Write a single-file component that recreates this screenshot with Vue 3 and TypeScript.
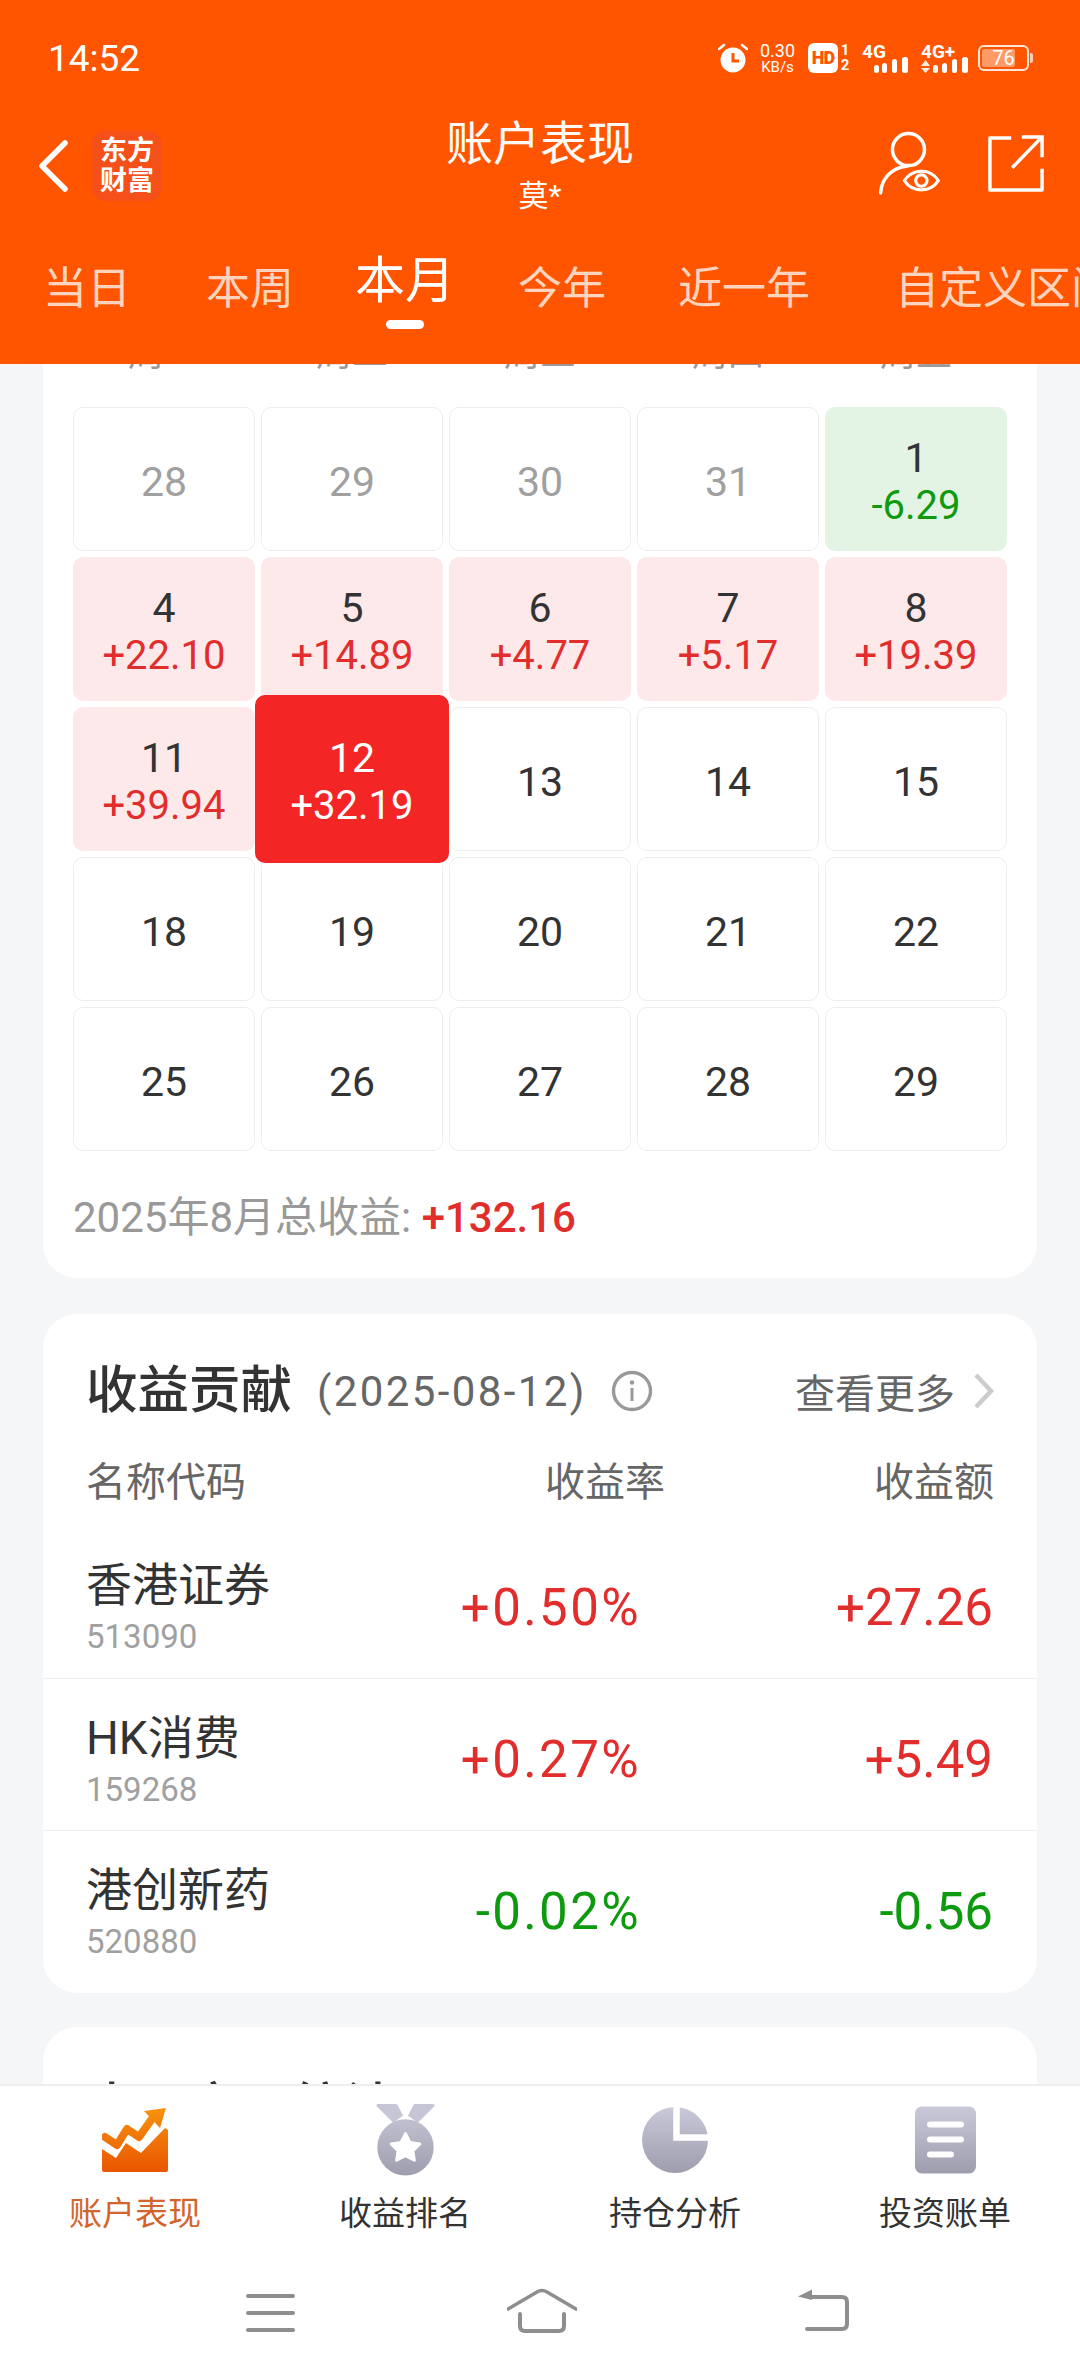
<template>
  <div class="page">
    <header class="top">
      <div class="status">
        <span class="time">14:52</span>
        <div class="status-icons">
          <svg class="alarm" viewBox="0 0 30 30" width="30" height="30">
            <circle cx="15" cy="17" r="12.5" fill="#fff" />
            <path d="M1 6 L6 2 M29 6 L24 2" stroke="#fff" stroke-width="2.4" stroke-linecap="round" />
            <path d="M15 10 V18 H21" fill="none" stroke="#ff5500" stroke-width="3" />
          </svg>
          <div class="net"><span>0.30</span><span class="net-unit">KB/s</span></div>
          <span class="hd">HD</span>
          <div class="sim"><span>1</span><span>2</span></div>
          <svg class="sig" viewBox="0 0 47 30" width="47" height="30">
            <text x="0" y="15" class="sig-text">4G</text>
            <rect x="12" y="22" width="5" height="8" rx="2.5" fill="#fff" />
            <rect x="20" y="20" width="5" height="10" rx="2.5" fill="#fff" />
            <rect x="30" y="16" width="5" height="14" rx="2.5" fill="#fff" />
            <rect x="40" y="14" width="6" height="16" rx="2.5" fill="#fff" />
          </svg>
          <svg class="sig" viewBox="0 0 47 30" width="47" height="30">
            <text x="0" y="15" class="sig-text">4G+</text>
            <path d="M0 23 L4.5 17 L9 23 Z M0 25 L9 25 L4.5 30 Z" fill="#fff" opacity=".9" />
            <rect x="12" y="22" width="5" height="8" rx="2.5" fill="#fff" />
            <rect x="21" y="20" width="5" height="10" rx="2.5" fill="#fff" />
            <rect x="31" y="16" width="5" height="14" rx="2.5" fill="#fff" />
            <rect x="41" y="14" width="6" height="16" rx="2.5" fill="#fff" />
          </svg>
          <div class="battery">
            <div class="battery-fill"></div>
            <span>76</span>
          </div>
        </div>
      </div>

      <div class="nav">
        <div class="nav-left">
          <svg viewBox="0 0 32 52" width="32" height="52">
            <path d="M27 3 L4 26 L27 49" fill="none" stroke="#fff" stroke-width="5.5" stroke-linecap="round" stroke-linejoin="round" />
          </svg>
          <div class="logo"><span>东方</span><span>财富</span></div>
        </div>
        <div class="nav-title">
          <div class="title">账户表现</div>
          <div class="sub">莫*</div>
        </div>
        <div class="nav-right">
          <svg viewBox="0 0 60 62" width="63" height="64">
            <circle cx="29" cy="18" r="15.5" fill="none" stroke="#fff" stroke-width="3.4" />
            <path d="M2 60 C3 46 12 36 28 34" fill="none" stroke="#fff" stroke-width="3.4" stroke-linecap="round" />
            <path d="M25 48 C33 36 50 36 58 48 C50 60 33 60 25 48 Z" fill="#ff5500" stroke="#fff" stroke-width="3" stroke-linejoin="round" />
            <circle cx="41.5" cy="48" r="5.5" fill="none" stroke="#fff" stroke-width="3" />
          </svg>
          <svg viewBox="0 0 58 60" width="56" height="58">
            <path d="M24 4 H2 V58 H56 V36" fill="none" stroke="#fff" stroke-width="3.6" stroke-linejoin="round" />
            <path d="M25 35 L55 4 M35 3 H56 V24" fill="none" stroke="#fff" stroke-width="3.6" />
          </svg>
        </div>
      </div>

      <div class="tabs">
        <span v-for="tab in tabs" :key="tab" class="tab" :class="{ active: tab === '本月' }">{{ tab }}</span>
      </div>
    </header>

    <main class="scroll">
      <section class="card calendar">
        <div class="weeks">
          <span v-for="w in weeks" :key="w">{{ w }}</span>
        </div>
        <div class="grid">
          <div
            v-for="cell in cells"
            :key="cell.key"
            class="cell"
            :class="[cell.kind, { today: cell.today }]"
          >
            <span class="day">{{ cell.day }}</span>
            <span v-if="cell.value" class="val">{{ cell.value }}</span>
          </div>
        </div>
        <div class="total">2025年8月总收益: <b>+132.16</b></div>
      </section>

      <section class="card contrib">
        <div class="card-head">
          <h3>收益贡献</h3>
          <span class="date">(2025-08-12)</span>
          <svg class="info" viewBox="0 0 42 42" width="42" height="42">
            <circle cx="21" cy="21" r="18.5" fill="none" stroke="#999" stroke-width="3.4" />
            <circle cx="21" cy="12.5" r="2.2" fill="#999" />
            <path d="M21 18 V31" stroke="#999" stroke-width="3" />
          </svg>
          <span class="more">查看更多</span>
          <svg class="chev" viewBox="0 0 22 36" width="22" height="36">
            <path d="M3 2 L18 18 L3 34" fill="none" stroke="#ccc" stroke-width="4.5" />
          </svg>
        </div>
        <div class="cols">
          <span class="col-name">名称代码</span>
          <span class="col-rate">收益率</span>
          <span class="col-amt">收益额</span>
        </div>
        <div v-for="row in rows" :key="row.code" class="row">
          <div class="row-name">
            <div class="name">{{ row.name }}</div>
            <div class="code">{{ row.code }}</div>
          </div>
          <div class="rate" :class="row.up ? 'up' : 'down'">{{ row.rate }}</div>
          <div class="amt" :class="row.up ? 'up' : 'down'">{{ row.amount }}</div>
        </div>
      </section>

      <section class="card next">
        <div class="card-head">
          <h3>本月交易统计</h3>
        </div>
      </section>
    </main>

    <footer class="bottom">
      <nav class="bar">
        <div class="bar-item on">
          <svg viewBox="0 0 66 64" width="66" height="64">
            <defs>
              <linearGradient id="gOrange2" gradientUnits="userSpaceOnUse" x1="0" y1="0" x2="0" y2="64">
                <stop offset="0" stop-color="#f7930e" />
                <stop offset="1" stop-color="#e95500" />
              </linearGradient>
            </defs>
            <path d="M0 41 L14 50 L24 35 L39 45 L63 20 L66 22 V62 Q66 64 64 64 H2 Q0 64 0 62 Z" fill="url(#gOrange2)" />
            <path d="M3 29 L15 37 L25 21 L37 29 L52 8" fill="none" stroke="url(#gOrange2)" stroke-width="8" stroke-linejoin="round" stroke-linecap="round" />
            <path d="M42 3 L64 0 L58 20 Z" fill="url(#gOrange2)" />
          </svg>
          <span>账户表现</span>
        </div>
        <div class="bar-item">
          <svg viewBox="0 0 59 73" width="59" height="73">
            <defs>
              <linearGradient id="gGray" gradientUnits="userSpaceOnUse" x1="0" y1="0" x2="0" y2="73">
                <stop offset="0" stop-color="#c9c9d9" />
                <stop offset="1" stop-color="#9d9dad" />
              </linearGradient>
            </defs>
            <path d="M1 0 H20 Q21 0 22 2 L27 12 L17 19 L0 2 Q0 0 1 0 Z M58 0 H39 Q38 0 37 2 L32 12 L42 19 L59 2 Q59 0 58 0 Z" fill="#c6c6d6" />
            <circle cx="29.5" cy="44" r="28.6" fill="url(#gGray)" />
            <path d="M29.5 30 L34 39 L44 40.5 L37 47.5 L38.5 57 L29.5 52.5 L20.5 57 L22 47.5 L15 40.5 L25 39 Z" fill="#fff" stroke="#fff" stroke-width="3" stroke-linejoin="round" />
          </svg>
          <span>收益排名</span>
        </div>
        <div class="bar-item">
          <svg viewBox="0 0 66 67" width="66" height="67">
            <defs>
              <linearGradient id="gGray2" gradientUnits="userSpaceOnUse" x1="0" y1="0" x2="0" y2="67">
                <stop offset="0" stop-color="#c9c9d9" />
                <stop offset="1" stop-color="#9d9dad" />
              </linearGradient>
            </defs>
            <circle cx="33" cy="33.5" r="33" fill="url(#gGray2)" />
            <path d="M34.5 0 V31 H66" fill="none" stroke="#fff" stroke-width="6.5" />
          </svg>
          <span>持仓分析</span>
        </div>
        <div class="bar-item">
          <svg viewBox="0 0 61 67" width="61" height="67">
            <defs>
              <linearGradient id="gGray3" gradientUnits="userSpaceOnUse" x1="0" y1="0" x2="0" y2="67">
                <stop offset="0" stop-color="#c9c9d9" />
                <stop offset="1" stop-color="#9d9dad" />
              </linearGradient>
            </defs>
            <rect width="61" height="67" rx="7" fill="url(#gGray3)" />
            <path d="M15 18 H46 M15 33 H46 M15 48 H36" stroke="#fff" stroke-width="6" stroke-linecap="round" />
          </svg>
          <span>投资账单</span>
        </div>
      </nav>

      <div class="sysnav">
        <svg class="sys-menu" viewBox="0 0 49 38" width="49" height="38">
          <path d="M2 2 H47 M2 19 H47 M2 36 H47" stroke="#8e8e8e" stroke-width="4" stroke-linecap="round" />
        </svg>
        <svg class="sys-home" viewBox="0 0 70 46" width="70" height="46">
          <path d="M1 21 L30 4 Q35 1 40 4 L69 21" fill="none" stroke="#8e8e8e" stroke-width="3.6" stroke-linecap="round" />
          <path d="M13 26 V38 Q13 43 18 43 H52 Q57 43 57 38 V26" fill="none" stroke="#8e8e8e" stroke-width="4" stroke-linecap="round" />
        </svg>
        <svg class="sys-back" viewBox="0 0 52 42" width="52" height="42">
          <path d="M0 7.5 L14 0.5 V11 Z" fill="#8e8e8e" />
          <path d="M12 8 H44 Q49 8 49 13 V35 Q49 40 44 40 H9" fill="none" stroke="#8e8e8e" stroke-width="4" stroke-linecap="round" />
        </svg>
      </div>
    </footer>
  </div>
</template>

<script setup lang="ts">
interface Cell {
  key: string
  day: number
  value?: string
  kind: 'off' | 'plain' | 'gain' | 'loss'
  today?: boolean
}

const tabs = ['当日', '本周', '本月', '今年', '近一年', '自定义区间']
const weeks = ['周一', '周二', '周三', '周四', '周五']

// 八月的日历，前面几格是七月
const gains: Record<number, string> = {
  4: '+22.10',
  5: '+14.89',
  6: '+4.77',
  7: '+5.17',
  8: '+19.39',
  11: '+39.94',
  12: '+32.19'
}

const cells: Cell[] = [
  ...[28, 29, 30, 31].map((day): Cell => ({ key: `j${day}`, day, kind: 'off' })),
  { key: 'a1', day: 1, value: '-6.29', kind: 'loss' },
  ...[4, 5, 6, 7, 8, 11, 12, 13, 14, 15, 18, 19, 20, 21, 22, 25, 26, 27, 28, 29].map((day): Cell => ({
    key: `a${day}`,
    day,
    value: gains[day],
    kind: gains[day] ? 'gain' : 'plain',
    today: day === 12
  }))
]

const rows = [
  { name: '香港证券', code: '513090', rate: '+0.50%', amount: '+27.26', up: true },
  { name: 'HK消费', code: '159268', rate: '+0.27%', amount: '+5.49', up: true },
  { name: '港创新药', code: '520880', rate: '-0.02%', amount: '-0.56', up: false }
]
</script>

<style>
html,
body {
  margin: 0;
  background: #f5f6f8;
}
</style>

<style scoped>
.page {
  width: 1080px;
  height: 2376px;
  display: flex;
  flex-direction: column;
  overflow: hidden;
  background: #f5f6f8;
  font-family: Roboto, "Noto Sans CJK SC", sans-serif;
  color: #333;
}

/* 顶部 */
.top {
  flex: none;
  height: 364px;
  background: #ff5500;
  color: #fff;
}

.status {
  height: 116px;
  padding: 0 48px;
  display: flex;
  justify-content: space-between;
  align-items: center;
}

.time {
  font-size: 37px;
}

.status-icons {
  display: flex;
  align-items: center;
}

.net {
  display: flex;
  flex-direction: column;
  align-items: center;
  margin-left: 10px;
  font-size: 18px;
  line-height: 17px;
  width: 39px;
}

.net-unit {
  margin-top: 1px;
  font-size: 15px;
  line-height: 14px;
}

.hd {
  margin-left: 11px;
  width: 30px;
  height: 30px;
  border-radius: 6px;
  background: #fff;
  color: #ff5500;
  font-size: 18px;
  line-height: 30px;
  font-weight: 900;
  text-align: center;
  letter-spacing: -1px;
}

.sim {
  display: flex;
  flex-direction: column;
  margin-left: 2px;
  width: 10px;
  font-size: 15px;
  line-height: 15px;
  font-weight: 700;
  text-align: center;
}

.sig {
  margin-left: 12px;
}

.sig-text {
  font-family: Roboto, sans-serif;
  font-size: 19px;
  font-weight: 700;
  fill: #fff;
}

.battery {
  position: relative;
  box-sizing: border-box;
  margin-left: 10px;
  margin-right: 3px;
  width: 51px;
  height: 26px;
  border: 2px solid rgba(255, 255, 255, 0.85);
  border-radius: 6px;
  text-align: center;
  font-size: 20px;
  line-height: 22px;
}

.battery span {
  position: relative;
}

.battery-fill {
  position: absolute;
  left: 2px;
  top: 2px;
  bottom: 2px;
  width: 33px;
  border-radius: 2px;
  background: rgba(255, 255, 255, 0.4);
}

.battery::after {
  content: "";
  position: absolute;
  right: -6px;
  top: 6px;
  width: 3px;
  height: 10px;
  border-radius: 0 2px 2px 0;
  background: rgba(255, 255, 255, 0.7);
}

.nav {
  height: 100px;
  display: flex;
  align-items: center;
  justify-content: space-between;
  padding: 0 36px 0 38px;
  position: relative;
}

.nav-left,
.nav-right {
  display: flex;
  align-items: center;
}

.nav-right {
  gap: 47px;
  margin-top: -7px;
}

.logo {
  margin-left: 22px;
  width: 70px;
  height: 70px;
  border-radius: 14px;
  background: #f5501a;
  display: flex;
  flex-direction: column;
  align-items: center;
  justify-content: center;
  font-size: 27px;
  line-height: 30px;
  font-weight: 700;
}

.nav-title {
  position: absolute;
  left: 0;
  right: 0;
  top: 0;
  text-align: center;
}

.title {
  font-size: 47px;
  line-height: 56px;
  opacity: 0.97;
}

.sub {
  margin-top: 4px;
  font-size: 30px;
  line-height: 40px;
}

.tabs {
  display: flex;
  align-items: flex-start;
  box-sizing: border-box;
  height: 118px;
  margin-top: 30px;
  padding: 18px 0 0 43px;
  white-space: nowrap;
  overflow: hidden;
}

.tab {
  flex: none;
  position: relative;
  font-size: 44px;
  line-height: 50px;
  color: rgba(255, 255, 255, 0.75);
}

.tab:nth-child(2) {
  margin-left: 75px;
}

.tab:nth-child(3) {
  margin-left: 61px;
}

.tab:nth-child(4) {
  margin-left: 63px;
}

.tab:nth-child(5) {
  margin-left: 72px;
}

.tab:nth-child(6) {
  margin-left: 85px;
}

.tab.active {
  margin-top: -8px;
  font-size: 50px;
  color: #fff;
}

.tab.active::after {
  content: "";
  position: absolute;
  left: 31px;
  top: 64px;
  width: 38px;
  height: 9px;
  border-radius: 5px;
  background: #fff;
}

/* 中间滚动区 */
.scroll {
  flex: 1;
  min-height: 0;
  overflow: hidden;
}

.card {
  margin: 0 43px;
  background: #fff;
  border-radius: 34px;
}

.calendar {
  margin-top: -60px;
  padding: 28px 30px 32px;
}

.weeks {
  display: grid;
  grid-template-columns: repeat(5, 182px);
  column-gap: 6px;
  height: 44px;
  line-height: 44px;
  font-size: 36px;
  color: #999;
  text-align: center;
}

.grid {
  display: grid;
  grid-template-columns: repeat(5, 182px);
  grid-auto-rows: 144px;
  gap: 6px;
  margin-top: 31px;
}

.cell {
  box-sizing: border-box;
  display: flex;
  flex-direction: column;
  align-items: center;
  justify-content: center;
  padding-top: 5px;
  border-radius: 10px;
  border: 1px solid #eeeeee;
  font-size: 41px;
  line-height: 48px;
}

.val {
  font-size: 40px;
}

.cell.off {
  color: #a0a0a0;
}

.cell.gain,
.cell.loss {
  border-color: transparent;
}

.cell.gain {
  background: #fde9e9;
}

.cell.gain .val {
  color: #e22d2d;
}

.cell.loss {
  background: #e4f4e4;
}

.cell.loss .val {
  color: #0e9a0e;
}

.cell.today {
  margin: -12px -6px;
  position: relative;
  z-index: 1;
  background: #f32525;
  color: #fff;
}

.cell.today .val {
  color: #fff;
}

.total {
  margin-top: 39px;
  font-size: 42px;
  line-height: 56px;
  color: #999;
}

.total b {
  font-weight: 500;
  color: #e22d2d;
}

.contrib {
  margin-top: 36px;
  height: 679px;
}

.card-head {
  display: flex;
  align-items: center;
  padding: 46px 42px 0 43px;
  height: 62px;
}

.card-head h3 {
  margin: 0;
  font-size: 51.5px;
  line-height: 62px;
  font-weight: 500;
  color: #333;
}

.date {
  margin-left: 25px;
  font-size: 42px;
  letter-spacing: 2.4px;
  color: #666;
}

.info {
  margin-left: 24px;
}

.more {
  margin-left: auto;
  font-size: 40px;
  color: #666;
}

.chev {
  margin-left: 18px;
}

.cols {
  display: flex;
  padding: 34px 43px 0 43px;
  margin-bottom: 16px;
  font-size: 40px;
  line-height: 54px;
  color: #666;
}

.col-rate {
  margin-left: auto;
  margin-right: 209px;
}

.row {
  display: flex;
  align-items: center;
  height: 152px;
  padding: 10px 44px 0 43px;
  box-sizing: border-box;
}

.row + .row {
  border-top: 1px solid #eee;
}

.row-name {
  width: 300px;
}

.name {
  font-size: 46px;
  line-height: 60px;
}

.code {
  font-size: 33px;
  line-height: 44px;
  color: #a0a0a0;
}

.rate,
.amt {
  font-size: 51px;
  text-align: right;
}

.rate {
  width: 255px;
  letter-spacing: 2.4px;
}

.amt {
  flex: 1;
}

.up {
  color: #e22d2d;
}

.down {
  color: #0e9a0e;
}

.next {
  margin-top: 34px;
  height: 300px;
}

.next .card-head {
  padding-top: 50px;
}

/* 底部 */
.bottom {
  flex: none;
  height: 292px;
  box-sizing: border-box;
  border-top: 2px solid #eeeeee;
  background: #fff;
}

.bar {
  display: grid;
  grid-template-columns: repeat(4, 270px);
}

.bar-item {
  display: flex;
  flex-direction: column;
  align-items: center;
  height: 150px;
  font-size: 33px;
  line-height: 44px;
}

.bar-item svg {
  margin-top: 18px;
  height: 73px;
}

.bar-item span {
  margin-top: 16px;
}

.bar-item.on {
  color: #d2652c;
}

.sysnav {
  display: flex;
  align-items: flex-start;
  padding: 58px 0 0 246px;
}

.sys-home {
  margin-left: 212px;
  margin-top: -6px;
}

.sys-back {
  margin-left: 221px;
  margin-top: -5px;
}
</style>
